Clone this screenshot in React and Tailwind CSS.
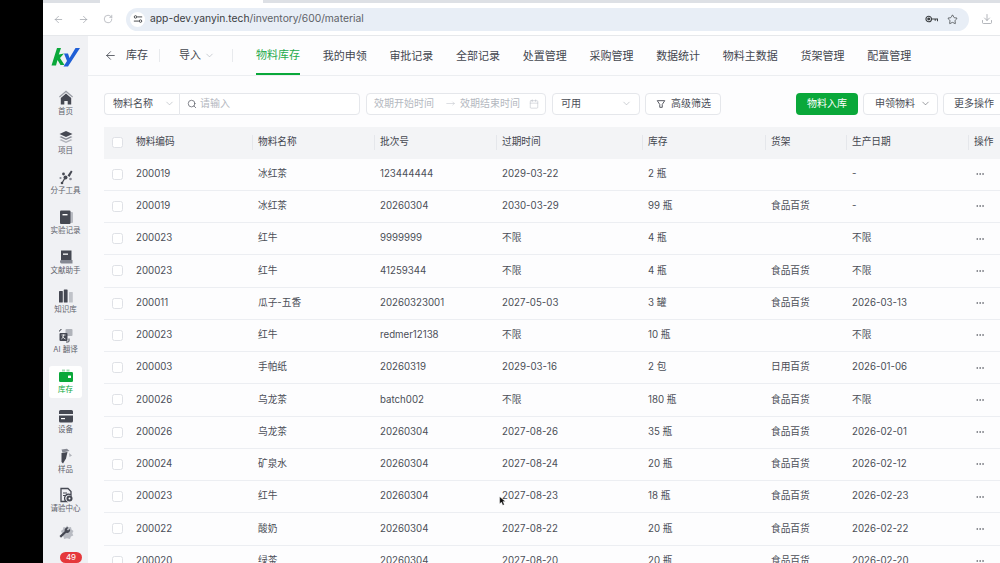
import React from "react";
import { ArrowLeft, ArrowRight, RotateCw, Star, Download, Search, Calendar, ChevronDown, Ellipsis, MoveRight } from "lucide-react";

const rows = [
  ["200019", "冰红茶", "123444444", "2029-03-22", "2 瓶", "", "-"],
  ["200019", "冰红茶", "20260304", "2030-03-29", "99 瓶", "食品百货", "-"],
  ["200023", "红牛", "9999999", "不限", "4 瓶", "", "不限"],
  ["200023", "红牛", "41259344", "不限", "4 瓶", "食品百货", "不限"],
  ["200011", "瓜子-五香", "20260323001", "2027-05-03", "3 罐", "食品百货", "2026-03-13"],
  ["200023", "红牛", "redmer12138", "不限", "10 瓶", "", "不限"],
  ["200003", "手帕纸", "20260319", "2029-03-16", "2 包", "日用百货", "2026-01-06"],
  ["200026", "乌龙茶", "batch002", "不限", "180 瓶", "食品百货", "不限"],
  ["200026", "乌龙茶", "20260304", "2027-08-26", "35 瓶", "食品百货", "2026-02-01"],
  ["200024", "矿泉水", "20260304", "2027-08-24", "20 瓶", "食品百货", "2026-02-12"],
  ["200023", "红牛", "20260304", "2027-08-23", "18 瓶", "食品百货", "2026-02-23"],
  ["200022", "酸奶", "20260304", "2027-08-22", "20 瓶", "食品百货", "2026-02-22"],
  ["200020", "绿茶", "20260304", "2027-08-20", "20 瓶", "食品百货", "2026-02-20"],
];

const tabs = ["我的申领", "审批记录", "全部记录", "处置管理", "采购管理", "数据统计", "物料主数据", "货架管理", "配置管理"];
const headers = ["物料名称", "批次号", "过期时间", "库存", "货架", "生产日期", "操作"];
const gridCols = "grid grid-cols-[26px_122px_122px_122px_146px_123px_81px_122px_72px]";

// sidebar icons, drawn by hand
const icons = {
  home: (
    <>
      <path d="M8 .5 1 6.500l.8 1L8 2.200l6.200 5.300.8-1z" fill="#9a9da5" />
      <path d="M2.800 8 8 3.600 13.200 8v6.500H9.700v-3.500H6.300v3.500H2.800z" fill="#454852" />
    </>
  ),
  layers: (
    <>
      <path d="M8 2 1.500 5 8 8l6.500-3z" fill="#454852" />
      <path d="M1.500 8 8 11l6.500-3-1.800-.8L8 9.400 3.300 7.200z" fill="#858892" />
      <path d="M1.500 11 8 14l6.500-3-1.800-.8L8 12.400l-4.700-2.200z" fill="#b0b3ba" />
    </>
  ),
  mol: (
    <>
      <path d="M9.500 6.500 13 1.500l1.500 1-3 5.500z" fill="#454852" />
      <circle cx="5.500" cy="5" r="1.400" fill="#454852" />
      <circle cx="7.500" cy="8.500" r="2" fill="#454852" />
      <circle cx="2.500" cy="9" r="1.100" fill="#858892" />
      <circle cx="4" cy="14" r="1.300" fill="#454852" />
      <path d="M7 9 4 14" stroke="#454852" strokeWidth="1.300" />
      <circle cx="12.500" cy="10" r="1.300" fill="#858892" />
    </>
  ),
  note: (
    <>
      <rect x="11" y="3" width="4" height="11" rx="1" fill="#b8bbc2" />
      <rect x="2" y="1.500" width="10.500" height="13.500" rx="1" fill="#454852" />
      <rect x="4.500" y="5" width="5" height="1.400" fill="#fff" />
    </>
  ),
  book: (
    <>
      <path d="M3 1.500h10.500V11H3z" fill="#454852" />
      <rect x="5" y="4.500" width="5" height="1.300" fill="#fff" />
      <path d="M2 12.500c0-1 .7-1.500 1.500-1.500H14.500v3.500h-11C2.700 14.500 2 13.500 2 12.500z" fill="#858892" />
    </>
  ),
  shelf: (
    <>
      <rect x="1" y="3" width="3.800" height="11.500" rx=".6" fill="#454852" />
      <rect x="5.800" y="1.500" width="3.800" height="13" rx=".6" fill="#454852" />
      <rect x="11" y="4" width="3.800" height="10.500" rx=".6" fill="#c0c3c9" />
    </>
  ),
  translate: (
    <>
      <rect x="7.500" y="1" width="7" height="7" rx="1" fill="#b0b3ba" />
      <rect x="1.500" y="5" width="8" height="8" rx="1" fill="#454852" />
      <path d="M3.500 7h4M5.500 6.500V7c0 2-1 3.500-2 4M4.500 8.500c.6 1.200 1.600 2 3 2.500" stroke="#fff" strokeWidth=".8" fill="none" />
      <path d="M11 10.500v2.500a1 1 0 0 1-1 1H8" stroke="#454852" strokeWidth="1" fill="none" />
      <path d="M1.500 3.500a2 2 0 0 1 2-2" stroke="#454852" strokeWidth="1" fill="none" />
    </>
  ),
  wallet: (
    <>
      <path d="M4 1.500h3v2H4zM8.500 1.500h3v2h-3z" fill="#a6dcb5" />
      <rect x="1" y="4" width="14" height="10" rx="1.200" fill="#0aa83a" />
      <rect x="10" y="7.500" width="3" height="2.500" rx=".5" fill="#fff" />
    </>
  ),
  device: (
    <>
      <path d="M2.500 2h11A1.500 1.500 0 0 1 15 3.500V6H1V3.500A1.500 1.500 0 0 1 2.500 2z" fill="#454852" />
      <path d="M1 7.500h14V13a1.500 1.500 0 0 1-1.500 1.500h-11A1.500 1.500 0 0 1 1 13z" fill="#454852" />
      <rect x="3" y="10" width="4" height="1.200" fill="#fff" />
    </>
  ),
  sample: (
    <>
      <path d="M3.500 1.500 9 .8l2.500 2.200-7 1.500z" fill="#858892" />
      <path d="M3.500 5 9.500 4 8 10.500 5 15.500 3.500 14z" fill="#454852" />
      <path d="M11 5l3 2.500L11.500 9z" fill="#b0b3ba" />
    </>
  ),
  request: (
    <>
      <path d="M3 1.500h7L13 4.500V8a3.500 3.500 0 0 0-4.800 6.500H3z" fill="none" stroke="#454852" strokeWidth="1.300" />
      <path d="M5 6h4M5 8.500h2" stroke="#454852" strokeWidth="1.100" />
      <circle cx="11.500" cy="11.500" r="3" fill="#454852" />
      <circle cx="11.500" cy="11.500" r="1" fill="#fff" />
    </>
  ),
  gear: (
    <>
      <path d="M9 1.500l1.500 2 2.500-.5.500 2.500 2 1.500-1.200 2.200 1 2.300-2.400 1L12 15l-3-.8L6 15l-.5-2.500-2.400-1 1-2.300L2.900 7l2-1.500L5.500 3 8 3.500z" fill="#b8bbc2" />
      <path d="M10.500 3.500a3 3 0 0 0-3.800 3.800L1.500 12 3 13.800l5.200-5a3 3 0 0 0 3.800-3.800L10 6.500 8.800 5.500z" fill="#454852" />
    </>
  ),
};

const navItems = [
  ["home", "首页"],
  ["layers", "项目"],
  ["mol", "分子工具"],
  ["note", "实验记录"],
  ["book", "文献助手"],
  ["shelf", "知识库"],
  ["translate", "AI 翻译"],
  ["wallet", "库存"],
  ["device", "设备"],
  ["sample", "样品"],
  ["request", "请验中心"],
];

function NavIcon({ name }) {
  return (
    <svg viewBox="0 0 16 16" className="w-[16px] h-[16px] shrink-0">
      {icons[name]}
    </svg>
  );
}

function Checkbox() {
  return <div className="w-[11px] h-[11px] rounded-[2.5px] border border-[#dfe1e6] bg-white" />;
}

function Box({ className = "", children }) {
  return (
    <div className={`h-[21.500px] flex items-center rounded-[4px] border border-[#e5e7eb] bg-white shrink-0 ${className}`}>
      {children}
    </div>
  );
}

function Sidebar() {
  return (
    <div className="w-[45px] shrink-0 bg-[#f0f1f4] flex flex-col items-center overflow-hidden">
      <svg viewBox="0 0 30 20" className="w-[30px] h-[20px] mt-[11px] mb-[20px] shrink-0 ml-[1px]">
        <path d="M6 1h4L7.800 7.500 13 6.500 9 11l4.500 7H9.500L6.500 13 5 18.500H.5z" fill="#0aa83a" />
        <path d="M13 6.500h4L18.500 11 24.500 1H29L17 19.500h-4.500l3.500-5.500z" fill="#1f5fd6" />
      </svg>
      {navItems.map(([key, label]) => {
        const active = key === "wallet";
        return (
          <div
            key={key}
            className={`w-[33px] h-[32px] mb-[7.800px] shrink-0 flex flex-col items-center justify-center rounded-[3px] ${active ? "bg-white" : ""}`}
          >
            <NavIcon name={key} />
            <span className={`mt-[1px] text-[7.500px] leading-[10px] whitespace-nowrap ${active ? "text-[#0aa83a]" : "text-[#5e616b]"}`}>
              {label}
            </span>
          </div>
        );
      })}
      <div className="shrink-0 -mt-[1px]">
        <NavIcon name="gear" />
      </div>
      <div className="mt-[12px] ml-[11px] shrink-0 w-[22px] h-[11px] rounded-full bg-[#e5383b] text-white text-[8px] leading-[11px] text-center">49</div>
    </div>
  );
}

function Header() {
  return (
    <div className="h-[40px] shrink-0 border-b border-[#eceef1] flex items-center text-[11px] text-[#43464f] pl-[16px]">
      <ArrowLeft className="w-[13px] h-[13px] shrink-0" strokeWidth={1.500} />
      <span className="ml-[9px]">库存</span>
      <div className="ml-[11px] w-px h-[13px] bg-[#e8eaed]" />
      <span className="ml-[19px]">导入</span>
      <ChevronDown className="ml-[3px] w-[11px] h-[11px] text-[#a4a8b1]" strokeWidth={1.200} />
      <div className="ml-[17px] w-px h-[13px] bg-[#e8eaed]" />
      <div className="ml-[23px] h-full flex gap-[22.700px]">
        <div className="h-full flex items-center border-b-2 border-[#0aa83a] text-[#1faa4d] pt-[2px] -mb-px">物料库存</div>
        {tabs.map((t) => (
          <div key={t} className="h-full flex items-center pt-[1px]">{t}</div>
        ))}
      </div>
    </div>
  );
}

function Filters() {
  return (
    <div className="mt-[17px] ml-[16px] flex items-center text-[10px] text-[#4b4e57] whitespace-nowrap">
      <Box className="w-[75px] rounded-r-none border-r-0 pl-[8px] justify-between pr-[4px]">
        物料名称
        <ChevronDown className="w-[11px] h-[11px] text-[#a4a8b1]" strokeWidth={1.200} />
      </Box>
      <Box className="w-[181px] rounded-l-none pl-[7px]">
        <Search className="w-[10px] h-[10px] text-[#5b5e67]" strokeWidth={1.800} />
        <span className="ml-[3px] text-[#b4b8c0]">请输入</span>
      </Box>
      <Box className="w-[180px] ml-[6px] pl-[7px] text-[#b4b8c0]">
        效期开始时间
        <MoveRight className="ml-[12px] w-[9px] h-[9px]" strokeWidth={1.200} />
        <span className="ml-[5px]">效期结束时间</span>
        <Calendar className="ml-[9px] w-[10px] h-[10px]" strokeWidth={1.200} />
      </Box>
      <Box className="w-[88px] ml-[6px] pl-[8px] pr-[7px] justify-between">
        可用
        <ChevronDown className="w-[11px] h-[11px] text-[#a4a8b1]" strokeWidth={1.200} />
      </Box>
      <Box className="w-[76px] ml-[5px] pl-[10px]">
        <svg viewBox="0 0 12 12" className="w-[10px] h-[10px]" fill="none" stroke="#4b4e57" strokeWidth="1.100">
          <path d="M1.500 2h9L7.500 6.500V10h-3V6.500z" />
        </svg>
        <span className="ml-[5px]">高级筛选</span>
      </Box>
      <div className="w-[62px] h-[21.500px] ml-[75px] shrink-0 rounded-[4px] bg-[#0aa83a] text-white flex items-center justify-center">物料入库</div>
      <Box className="w-[75px] ml-[5px] pl-[11px]">
        申领物料
        <ChevronDown className="ml-[5px] w-[11px] h-[11px]" strokeWidth={1.200} />
      </Box>
      <Box className="w-[80px] ml-[5px] pl-[10px]">
        更多操作
        <ChevronDown className="ml-[5px] w-[11px] h-[11px]" strokeWidth={1.200} />
      </Box>
    </div>
  );
}

function Table() {
  return (
    <div className="mt-[12px] ml-[16px] w-[936px] text-[9.700px] text-[#4b4e57]">
      <div className={`${gridCols} h-[32px] bg-[#f3f4f6] items-center text-[#43464f]`}>
        <div className="pl-[8px]"><Checkbox /></div>
        <div className="pl-[6px]">物料编码</div>
        {headers.map((h) => (
          <div key={h} className="h-[15px] border-l border-[#e5e7eb] pl-[5px] flex items-center">{h}</div>
        ))}
      </div>
      {rows.map((r, i) => (
        <div key={i} className={`${gridCols} h-[32.250px] border-b border-[#eceef2] items-center whitespace-nowrap`}>
          <div className="pl-[8px]"><Checkbox /></div>
          {r.map((c, j) => (
            <div key={j} className="pl-[6px]">{c}</div>
          ))}
          <div className="pl-[7px] text-[#4b4e57]"><Ellipsis className="w-[10px] h-[10px]" strokeWidth={1.500} /></div>
        </div>
      ))}
    </div>
  );
}

export default function App() {
  return (
    <div
      className="relative w-[1000px] h-[563px] overflow-hidden bg-black flex"
      style={{ fontFamily: 'Inter, "Noto Sans CJK SC", sans-serif' }}
    >
      <div className="ml-[43px] w-[957px] bg-white flex flex-col overflow-hidden">
        <div className="h-[3px] shrink-0 flex">
          <div className="w-[57px] bg-[#dde0e5]" />
          <div className="w-[163px] bg-white" />
          <div className="flex-1 bg-[#dde0e5]" />
        </div>
        <div className="h-[33px] shrink-0 border-b border-[#e6e8eb] flex items-center text-[#9b9fa6]">
          <ArrowLeft className="ml-[10px] w-[11px] h-[11px]" strokeWidth={1.500} />
          <ArrowRight className="ml-[14px] w-[11px] h-[11px]" strokeWidth={1.500} />
          <RotateCw className="ml-[14px] w-[10px] h-[10px]" strokeWidth={1.500} />
          <div className="ml-[13px] w-[843px] h-[23px] rounded-full bg-[#e8eef6] flex items-center pl-[4px] pr-[11px] text-[#3c4043]">
            <div className="w-[15px] h-[15px] rounded-full bg-white flex items-center justify-center">
              <svg viewBox="0 0 12 12" className="w-[10px] h-[10px]" fill="none" stroke="#3c4043" strokeWidth="1.100">
                <path d="M5 3.500h6M1 8.500h6" />
                <circle cx="3" cy="3.500" r="1.500" />
                <circle cx="9" cy="8.500" r="1.500" />
              </svg>
            </div>
            <span className="ml-[5px] text-[10.300px]">app-dev.yanyin.tech<span className="text-[#5f6368]">/inventory/600/material</span></span>
            <svg viewBox="0 0 14 10" className="ml-auto w-[13px] h-[10px]" fill="none" stroke="#3c4043" strokeWidth="1.200">
              <circle cx="4" cy="5" r="3" />
              <circle cx="4" cy="5" r="1" fill="#3c4043" />
              <path d="M7 5h6.500v2.500M11 5v2" />
            </svg>
            <Star className="ml-[9px] w-[11px] h-[11px]" strokeWidth={1.600} />
          </div>
          <Download className="ml-[12px] w-[12px] h-[12px]" strokeWidth={1.500} />
        </div>
        <div className="flex-1 min-h-0 flex">
          <Sidebar />
          <div className="flex-1 min-w-0 bg-[#fdfdfe] flex flex-col overflow-hidden">
            <Header />
            <Filters />
            <Table />
          </div>
        </div>
      </div>
      <svg viewBox="0 0 10 14" className="absolute left-[499px] top-[495px] w-[7px] h-[12px]">
        <path d="M1 1v10l2.500-2.500L5.500 13l2-1-2-4.300H9z" fill="#111" stroke="#fff" strokeWidth=".4" />
      </svg>
    </div>
  );
}
